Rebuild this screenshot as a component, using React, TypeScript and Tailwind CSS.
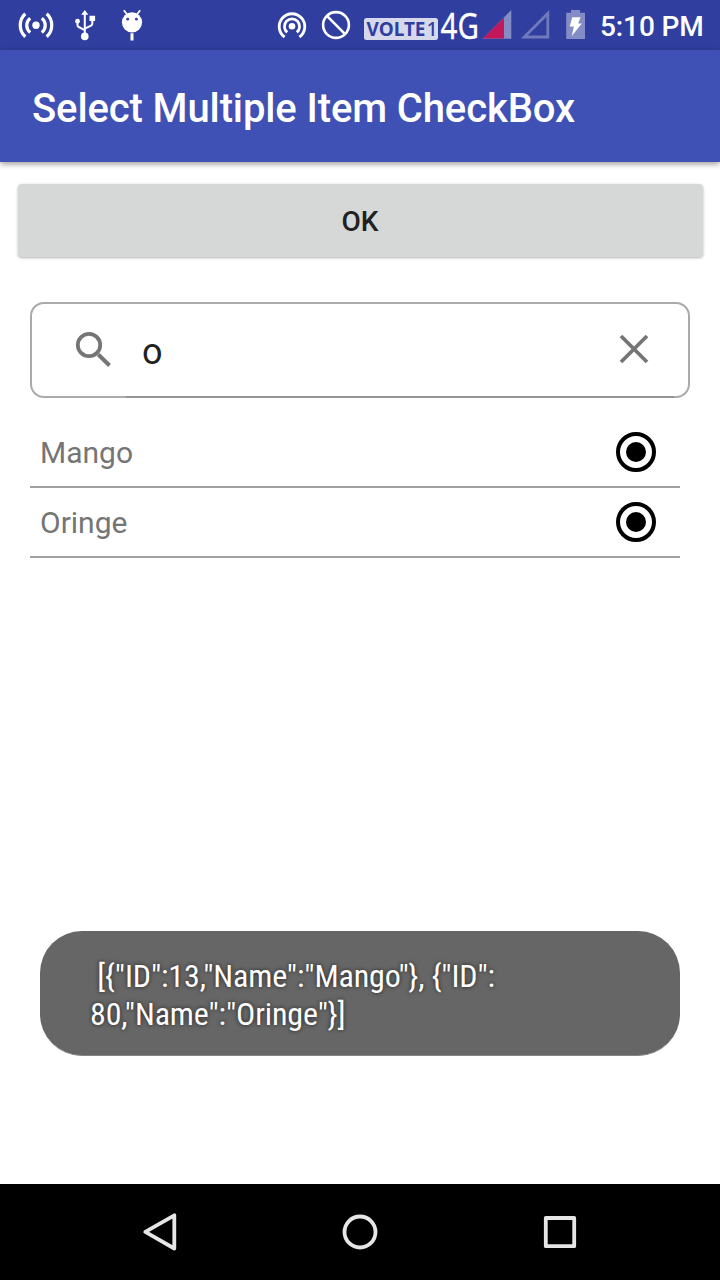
import React from "react";

const fruits = ["Mango", "Oringe"];

function StatusBar() {
  return (
    <header className="flex h-[50px] shrink-0 bg-[#303f9f] text-white">
      <svg className="ml-4 shrink-0" width="40" height="50" viewBox="16 0 40 50" fill="none" stroke="white" strokeWidth="3.2">
        <circle cx="36" cy="25.3" r="3.7" fill="white" stroke="none" />
        <path d="M30.2 18.2a9 9 0 0 0 0 14.2M41.8 18.2a9 9 0 0 1 0 14.2M25.3 13.8a15.6 15.6 0 0 0 0 23M46.7 13.8a15.6 15.6 0 0 1 0 23" />
      </svg>
      <svg className="ml-4 shrink-0" width="28" height="50" viewBox="72 0 28 50" fill="none" stroke="white" strokeWidth="2">
        <path d="M84.8 36V13M77.5 21v4.2q0 1.2 1.2 1.8l6.1 3.2M92.3 20v3.8q0 1.2-1.2 1.8l-6.3 3" />
        <path d="M84.8 10l3.6 4.8h-7.2zM89.5 15.7h5.6v5.4h-5.6z" fill="white" stroke="none" />
        <circle cx="84.8" cy="36.4" r="3.8" fill="white" stroke="none" />
        <circle cx="77.5" cy="21.2" r="2.4" fill="white" stroke="none" />
      </svg>
      <svg className="ml-[18px] shrink-0" width="28" height="50" viewBox="118 0 28 50">
        <circle cx="132" cy="22.3" r="10.1" fill="white" />
        <path d="M123.8 10.3l3.5 4.4M140.2 10.3l-3.5 4.4" stroke="white" strokeWidth="1.8" />
        <path d="M130.5 33.3h3v7.2h-3z" fill="white" />
        <circle cx="127.7" cy="19.2" r="1.4" fill="#303f9f" />
        <circle cx="136.4" cy="19.2" r="1.4" fill="#303f9f" />
      </svg>
      <svg className="ml-[130px] shrink-0" width="32" height="50" viewBox="276 0 32 50" fill="none" stroke="white" strokeWidth="2.8">
        <circle cx="292" cy="26.2" r="3.3" fill="white" stroke="none" />
        <path d="M287.2 32.4a7.6 7.6 0 1 1 9.6 0M284.6 37a12.8 12.8 0 1 1 14.8 0" />
      </svg>
      <svg className="ml-3 shrink-0" width="32" height="50" viewBox="320 0 32 50" fill="none" stroke="white" strokeWidth="2.6">
        <circle cx="336" cy="25" r="12.9" />
        <path d="M326.9 15.9l18.2 18.2" />
      </svg>
      <svg className="ml-3 shrink-0 overflow-visible" width="116" height="50" viewBox="364 0 116 50">
        <rect x="364" y="18" width="74" height="22" rx="2.5" fill="#d6d9ec" />
        <text x="366.5" y="36" textLength="59" lengthAdjust="spacingAndGlyphs" className="font-['Noto_Sans',sans-serif] text-[19.5px] font-bold" fill="#303f9f">VOLTE</text>
        <text x="426.5" y="36" className="font-['Noto_Sans',sans-serif] text-[19.5px] font-medium" fill="#303f9f">1</text>
        <text x="440.6" y="38.6" textLength="38.4" lengthAdjust="spacingAndGlyphs" className="font-['Noto_Sans',sans-serif] text-[36px]" fill="white" stroke="white" strokeWidth="0.3">4G</text>
      </svg>
      <svg className="ml-[2px] shrink-0" width="106" height="50" viewBox="482 0 106 50">
        <path d="M511.3 10v28.7h-28.6z" fill="#838cc5" />
        <path d="M504 17.4v21.1h-21.1z" fill="#c2185b" />
        <path d="M547.8 13.4v23.6h-23.6z" fill="none" stroke="#6f79bc" strokeWidth="2.8" />
        <path d="M566.2 12.8h4.8V10h9v2.8h5v26.1h-18.8z" fill="#838cc5" />
        <path d="M572.3 17.3h8.2l-2.3 6.2h3.6L571.8 36l2-9.6h-4.1z" fill="white" />
      </svg>
      <time className="ml-3 whitespace-nowrap font-[Roboto,sans-serif] text-[28px] font-medium leading-[54px] tracking-[-0.1px]">5:10 PM</time>
    </header>
  );
}

function ListRow({ name }: { name: string }) {
  return (
    <li className="flex h-[70px] items-center justify-between border-b-2 border-[#a0a0a0] pl-[10px] pr-6 text-[30px] text-[#757575]">
      <span>{name}</span>
      <svg width="40" height="40" viewBox="0 0 40 40">
        <circle cx="20" cy="20" r="18" fill="none" stroke="black" strokeWidth="4" />
        <circle cx="20" cy="20" r="10" />
      </svg>
    </li>
  );
}

export default function App() {
  return (
    <div className="flex h-[1280px] w-[720px] flex-col overflow-hidden bg-white font-[Roboto,sans-serif]">
      <StatusBar />
      <div className="flex h-28 shrink-0 items-center bg-[#3f51b5] px-8 pt-[6px] shadow-[0_2px_6px_rgba(0,0,0,0.4)]">
        <h1 className="whitespace-nowrap text-[40px] font-medium tracking-[-0.12px] text-white">Select Multiple Item CheckBox</h1>
      </div>
      <main className="flex grow flex-col">
        <button className="ml-[17.5px] mr-[17.5px] mt-[22px] h-[73px] rounded-[4px] bg-[#d6d8d7] pt-[3px] text-[28px] font-medium text-[#212121] shadow-[0_1px_3px_rgba(0,0,0,0.3)]">OK</button>
        <div className="ml-[30px] mt-[45px] flex h-24 w-[660px] rounded-[14px] border-2 border-[#aaaaaa]">
          <svg className="ml-[43px] mt-[26px] shrink-0" width="38" height="38" viewBox="75 330 38 38" fill="none" stroke="#757575">
            <circle cx="89" cy="345" r="11.2" strokeWidth="3.8" />
            <path d="M98.3 354.5l11.2 11" strokeWidth="4" />
          </svg>
          <div className="-mb-[2px] ml-[13px] flex w-[548px] border-b-2 border-[#969696] pb-[1px]">
            <span className="ml-4 mt-[24px] w-[476px] shrink-0 text-[36px] leading-[48px] text-[#212121]">o</span>
            <svg className="mt-[29px] shrink-0" width="32" height="32" viewBox="618 333 32 32" fill="none" stroke="#757575" strokeWidth="3.8">
              <path d="M621 336l26 26M647 336l-26 26" />
            </svg>
          </div>
        </div>
        <ul className="ml-[30px] mt-5 w-[650px]">
          {fruits.map((name) => <ListRow key={name} name={name} />)}
        </ul>
        <div className="mb-[128px] ml-10 mt-auto h-[125px] w-[640px] whitespace-pre rounded-[42px] border-b border-[#858585] bg-[#666666] pl-[50px] pt-[26px] font-['Roboto_Condensed',Roboto,sans-serif] text-[32px] leading-[38px] tracking-[-0.13px] text-white [font-stretch:condensed] [text-shadow:0_0_4px_rgba(0,0,0,0.7)]">
          {" [{\"ID\":13,\"Name\":\"Mango\"}, {\"ID\":\n80,\"Name\":\"Oringe\"}]"}
        </div>
      </main>
      <nav className="flex h-24 shrink-0 items-center justify-between bg-black pl-[140px] pr-[140px]">
        <svg width="40" height="40" viewBox="140 1212 40 40" fill="none" stroke="#e6e6e6" strokeWidth="3.8" strokeLinejoin="round">
          <path d="M174.3 1215.3v33.2l-29-16.6z" />
        </svg>
        <svg width="40" height="40" viewBox="340 1212 40 40" fill="none" stroke="#e6e6e6" strokeWidth="3.8">
          <circle cx="360" cy="1232" r="15.5" />
        </svg>
        <svg width="40" height="40" viewBox="540 1212 40 40" fill="none" stroke="#e6e6e6" strokeWidth="3.8" strokeLinejoin="round">
          <path d="M545.8 1218h28.4v28.2h-28.4z" />
        </svg>
      </nav>
    </div>
  );
}
